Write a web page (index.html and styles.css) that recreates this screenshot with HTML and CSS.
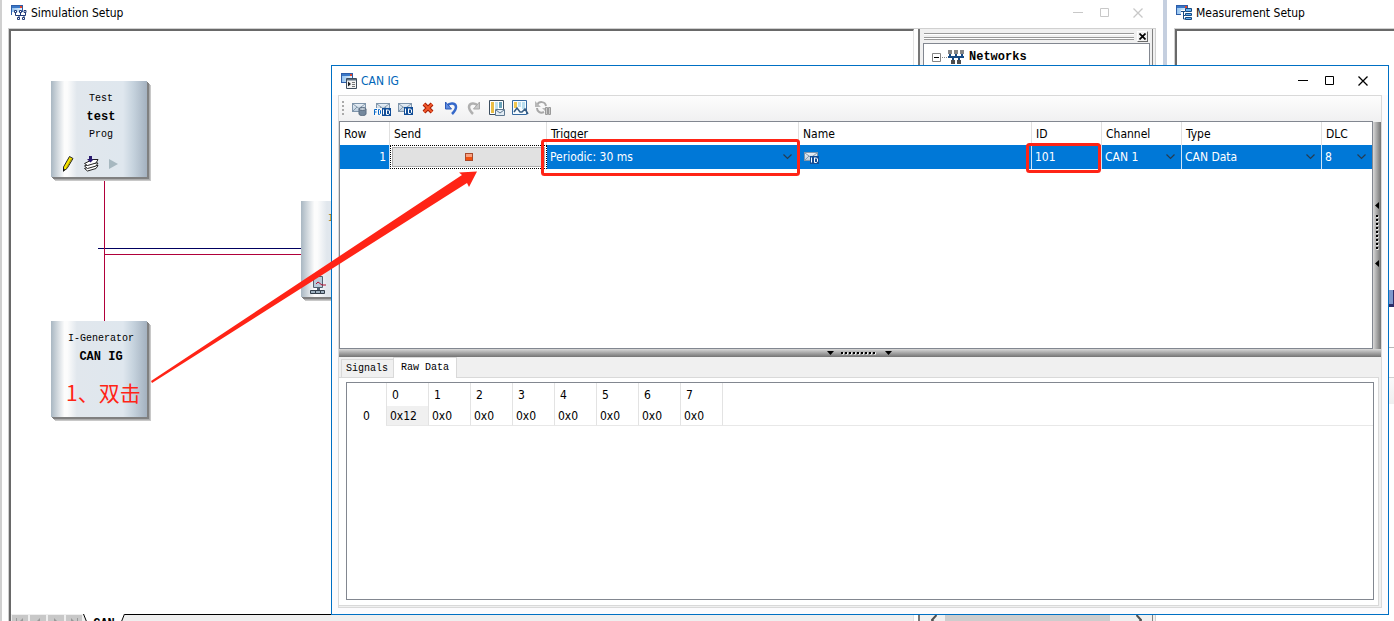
FILE: index.html
```html
<!DOCTYPE html>
<html lang="en">
<head>
<meta charset="utf-8">
<title>CAN IG</title>
<link rel="stylesheet" href="styles.css">
</head>
<body>
<svg class="defs" aria-hidden="true">
  <defs>
    <linearGradient id="win" x1="0" x2="1"><stop offset="0" stop-color="#8fc0ee"/><stop offset="1" stop-color="#e8f4ff"/></linearGradient>
    <linearGradient id="mail" x1="0" y1="0" x2="0" y2="1"><stop offset="0" stop-color="#eaf1f8"/><stop offset="1" stop-color="#b9cbdc"/></linearGradient>
    <symbol id="app-window" viewBox="0 0 16 16">
      <rect x=".5" y=".5" width="11" height="9" fill="url(#win)" stroke="#2d5da8"/>
      <path d="M1 1h10v2H1z" fill="#3a78c8"/><path d="M9 1h2v2H9z" fill="#e0452c"/>
    </symbol>
    <symbol id="chevron" viewBox="0 0 9 6"><path d="m.5.5 4 4 4-4" fill="none" stroke="#263c50" stroke-width="1.200"/></symbol>
    <symbol id="envelope" viewBox="0 0 16 16">
      <rect x="1.500" y="3.500" width="13" height="8" fill="url(#mail)" stroke="#7f95ab"/>
      <path d="m2 4 6 4.500L14 4M2 11l4-4M14 11l-4-4" fill="none" stroke="#8599ab"/>
    </symbol>
    <symbol id="id-badge" viewBox="0 0 9 8">
      <path d="M0 0h9v8H0z" fill="#124e98"/>
      <path d="M1.500 1.500v5M4 2h2.500l1 1v2.500l-1 1H4.500V2" fill="none" stroke="#fff"/>
    </symbol>
    <symbol id="minimize" viewBox="0 0 10 10"><path d="M0 4.500h10" stroke="currentColor"/></symbol>
    <symbol id="maximize" viewBox="0 0 10 10"><path d="M.5.5h8v8h-8z" fill="none" stroke="currentColor"/></symbol>
    <symbol id="close" viewBox="0 0 10 10"><path d="m.5.5 9 9m0-9-9 9" stroke="currentColor" stroke-width="1.300"/></symbol>
  </defs>
</svg>

<main class="desktop">
  <section class="window simulation">
    <header class="titlebar">
      <svg class="icon" viewBox="0 0 16 16"><use href="#app-window"/><path d="M1 7h15v9H6V10H1z" fill="#fff"/><path d="M4.500 7v3.500h10V7M8 10.500V13M13 10.500V13M9.500 7v3" fill="none" stroke="#1f3a78"/><g fill="#fff" stroke="#1f3a78"><path d="M3.500 5.500h2v2h-2zM8.500 5.500h2v2h-2zM13 5.500h2v2h-2zM6.500 12.500h2v2h-2zM11.500 12.500h2v2h-2z"/></g></svg>
      <h1>Simulation Setup</h1>
      <div class="controls muted">
        <button type="button" aria-label="Minimize"><svg><use href="#minimize"/></svg></button>
        <button type="button" aria-label="Maximize"><svg><use href="#maximize"/></svg></button>
        <button type="button" aria-label="Close"><svg><use href="#close"/></svg></button>
      </div>
    </header>
    <div class="frame">
      <div class="workspace">
        <div class="canvas">
          <svg class="wires" aria-hidden="true">
            <path d="M87 217h204v1H87z" fill="#000060"/>
            <path d="M93 149h1v141h-1z" fill="#b0003a"/>
            <path d="M93 223h198v1H93z" fill="#b0003a"/>
          </svg>
          <article class="node node-test">
            <p>Test</p><p class="strong">test</p><p>Prog</p>
            <div class="node-tools">
              <svg viewBox="0 0 12 16"><path d="M7.500.5 11 2.500 5 12.500l-3.500 2.500v-4z" fill="#f6e400" stroke="#222"/><path d="M9.500 3 4.500 12" stroke="#a89400"/><path d="m1 12 2 1.500L1 16z" fill="#111"/></svg>
              <svg viewBox="0 0 15 16"><g fill="#fff" stroke="#222"><path d="m.5 12.500 8-3h5.500l-2 3-8.500 2.500z"/><path d="m.5 10 8-3h5.500l-2 3-8.500 2.500z"/><path d="m.5 7.500 8-4h5.500l-2 3.500-8.500 2.500z"/></g><path d="M5 0h3v3h2L6.500 6.500 3 3h2z" fill="#2a1a70"/></svg>
              <svg viewBox="0 0 9 10"><path d="m0 0 9 5-9 5z" fill="#a7b8c0"/></svg>
            </div>
          </article>
          <article class="node node-ig"><p>I-Generator</p><p class="strong">CAN IG</p></article>
          <article class="node node-interactive"><p>I</p>
            <svg class="device" viewBox="0 0 18 18"><path d="M4.500.5h9v11h-9z" fill="#b9cbd9" stroke="#4f6070"/><path d="M8 12h3v3H8z" fill="#4f6070"/><path d="M1.500 14.500h5v3h-5zM6.500 14.500h5v3h-5zM11.500 14.500h4v3h-4z" fill="#9fb1c0" stroke="#333f4c"/><path d="m7 8 2-2 4 3h4" fill="none" stroke="#b01030"/></svg>
          </article>
        </div>
        <nav class="sheets">
          <button type="button" aria-label="First"><svg viewBox="0 0 8 10"><path d="M0 0h1v10H0zM7 0v10L2 5z"/></svg></button>
          <button type="button" aria-label="Previous"><svg viewBox="0 0 8 10"><path d="M6 0v10L1 5z"/></svg></button>
          <button type="button" aria-label="Next"><svg viewBox="0 0 8 10"><path d="M2 0v10l5-5z"/></svg></button>
          <button type="button" aria-label="Last"><svg viewBox="0 0 8 10"><path d="M7 0h1v10H7zM1 0v10l5-5z"/></svg></button>
          <button type="button" class="sheet"><svg viewBox="0 0 42 20"><path d="M0 0h42L33 20H9z" fill="#fff"/><path d="m.5 0 8 20M41.500 0l-8 20" stroke="#000"/></svg><span>CAN</span></button>
          <span class="sheet-line"></span>
        </nav>
      </div>
      <aside class="networks">
        <div class="grip"><i></i><button type="button" aria-label="Close panel"><svg viewBox="0 0 7 7"><path d="m.5.5 6 6m0-6-6 6" stroke="#000" stroke-width="1.700"/></svg></button></div>
        <div class="tree">
          <svg class="expander" viewBox="0 0 16 9"><path d="M.5.5h8v8h-8z" fill="#fff" stroke="#848484"/><path d="M2 4.500h5" stroke="#000"/><path d="M10 4.500h6" stroke="#888" stroke-dasharray="1 1"/></svg>
          <svg class="icon" viewBox="0 0 16 14"><path d="M0 0h4v4H0zM6 0h4v4H6zM12 0h4v4h-4z" fill="#858585"/><path d="M2 4v3M8 4v3M14 4v3M5 7v3M11 7v3M0 7h16" stroke="#174a83" stroke-width="2"/><path d="M3 10h4v4H3zM9 10h4v4H9z" fill="#4d4d4d"/></svg>
          <span>Networks</span>
        </div>
        <div class="scroll">
          <svg viewBox="0 0 6 10"><path d="M5.500 0 1 5l4.500 5"/></svg><i></i><svg viewBox="0 0 6 10"><path d="M.5 0 5 5 .5 10"/></svg>
        </div>
      </aside>
    </div>
  </section>

  <section class="window measurement">
    <header class="titlebar">
      <svg class="icon" viewBox="0 0 16 16"><use href="#app-window"/><path d="M5 5h11v11H8v-5H5z" fill="#fff"/><path d="M5 6.500h4M7.500 6v8M7.500 10.500h2M7.500 14h2" fill="none" stroke="#174a83"/><path d="M9.500 3.500h6v3h-6zM9.500 8.500h6v2h-6zM9.500 12.500h6v2h-6z" fill="#63b0ee" stroke="#174a83"/></svg>
      <h2>Measurement Setup</h2>
    </header>
    <div class="frame measure-frame"><i class="block"></i><i class="strip"></i></div>
  </section>

  <section class="dialog">
    <header class="titlebar">
      <svg class="icon" viewBox="0 0 16 16"><use href="#app-window"/><path d="M5.500 5.500h10v10h-10z" fill="#f4f4f4" stroke="#3e4c5c"/><path d="M6 6h9v1.500H6z" fill="#5b6c7e"/><path d="m7 8.500 3 2.500-3 2.500z" fill="#222"/><path d="M11 9.500h3M11 11.500h3M11 13.500h3" stroke="#777"/></svg>
      <h2>CAN IG</h2>
      <div class="controls">
        <button type="button" aria-label="Minimize"><svg><use href="#minimize"/></svg></button>
        <button type="button" aria-label="Maximize"><svg><use href="#maximize"/></svg></button>
        <button type="button" aria-label="Close"><svg><use href="#close"/></svg></button>
      </div>
    </header>
    <div class="panel">
      <div class="toolbar" role="toolbar" aria-label="Frames">
        <i class="handle"></i>
        <button type="button" aria-label="New frame from database"><svg viewBox="0 0 16 16"><use href="#envelope" width="16" height="16"/><path d="M8 9v5c0 2 7 2 7 0V9z" fill="#74889d" stroke="#596b80"/><ellipse cx="11.500" cy="9" rx="3.500" ry="1.500" fill="#c3ced9" stroke="#596b80"/></svg></button>
        <button type="button" aria-label="New CAN FD frame"><svg viewBox="0 0 16 16"><use href="#envelope" x="1" width="16" height="16"/><path d="M0 8h8v8H0z" fill="#f8f8f8"/><path d="M.5 15V9.500H3M.5 12h2M4.500 9.500v5h1l1-1v-3l-1-1z" fill="none" stroke="#0868c8"/><use href="#id-badge" x="8" y="8" width="9" height="8"/></svg></button>
        <button type="button" aria-label="New CAN frame"><svg viewBox="0 0 16 16"><use href="#envelope" width="16" height="16"/><use href="#id-badge" x="7" y="7" width="9" height="8"/></svg></button>
        <button type="button" aria-label="Delete"><svg viewBox="0 0 16 16"><path d="m4 4 8 8m0-8-8 8" stroke="#a51c04" stroke-width="4"/><path d="m4 4 8 8m0-8-8 8" stroke="#f2592c" stroke-width="2"/></svg></button>
        <button type="button" aria-label="Undo"><svg viewBox="0 0 16 16"><path d="M4 6c3-4 9-3 9 1 0 3-2 5-4 7" fill="none" stroke="#3669ca" stroke-width="2.500"/><path d="M2.500 2v7h6z" fill="#5f8ce0" stroke="#2d5ab8"/></svg></button>
        <button type="button" aria-label="Redo" disabled><svg viewBox="0 0 16 16"><path d="M12 6C9 2 3 3 3 7c0 3 2 5 4 7" fill="none" stroke="#b0b0b0" stroke-width="2.500"/><path d="M13.500 2v7h-6z" fill="#c8c8c8" stroke="#a8a8a8"/></svg></button>
        <button type="button" aria-label="Show columns"><svg viewBox="0 0 16 16"><path d="M.5.5h14v14H.5z" fill="#fff" stroke="#3c4e60"/><path d="M2 2h3v11H2z" fill="#e8bd45"/><path d="M6 2h3v7H6z" fill="#bfe0ee"/><path d="M10 2h3v6h-3z" fill="#6aa4bb"/><path d="M6.500 9.500h9v6h-9z" fill="#e3ecf4" stroke="#5e7890"/><path d="m7 10 4 3 4-3" fill="none" stroke="#5e7890"/></svg></button>
        <button type="button" aria-label="Show signals"><svg viewBox="0 0 16 16"><path d="M.5.5h14v14H.5z" fill="#f7fcff" stroke="#3569a0"/><path d="M2 2h3v6H2z" fill="#f1c64d"/><path d="M6 2h3v5H6zM10 2h3v7h-3z" fill="#b9deee"/><path d="m2 12 3-4 3 4h2l3-3 3 5" fill="none" stroke="#385d83" stroke-width="1.500"/></svg></button>
        <button type="button" aria-label="Synchronize" disabled><svg viewBox="0 0 16 16"><path d="M2 5c2-4 8-4 9 1M9 12c-4 2-7-1-7-4" fill="none" stroke="#a8a8a8" stroke-width="2"/><path d="M0 1v6h6zM12 8H7l4 4" fill="#b8b8b8"/><path d="M10.500 7.500h2v7h-2zM13.500 7.500h2v7h-2z" fill="#cacaca" stroke="#9a9a9a"/></svg></button>
      </div>
      <div class="upper">
        <div class="frames">
          <table class="frame-table">
            <colgroup><col class="w-row"><col class="w-send"><col class="w-trigger"><col><col class="w-id"><col class="w-channel"><col class="w-type"><col class="w-dlc"></colgroup>
            <thead><tr><th>Row</th><th>Send</th><th>Trigger</th><th>Name</th><th>ID</th><th>Channel</th><th>Type</th><th>DLC</th></tr></thead>
            <tbody><tr>
              <td class="number">1</td>
              <td class="send-cell"><button type="button" aria-label="Send"><i></i></button></td>
              <td><div class="pick"><select aria-label="Trigger"><option>Periodic: 30 ms</option></select><svg><use href="#chevron"/></svg></div></td>
              <td class="name-cell"><svg class="icon" viewBox="0 0 16 16"><use href="#envelope" width="16" height="16"/><use href="#id-badge" x="7" y="7" width="9" height="8"/></svg></td>
              <td><input class="id-input" aria-label="ID" value="101"></td>
              <td><div class="pick"><select aria-label="Channel"><option>CAN 1</option></select><svg><use href="#chevron"/></svg></div></td>
              <td><div class="pick"><select aria-label="Type"><option>CAN Data</option></select><svg><use href="#chevron"/></svg></div></td>
              <td><div class="pick"><select aria-label="DLC"><option>8</option></select><svg><use href="#chevron"/></svg></div></td>
            </tr></tbody>
          </table>
        </div>
        <div class="splitter vertical"><svg viewBox="0 0 8 68"><path d="M6 0v7L2 3.500zM6 58v7L2 61.500z"/><path d="M4.500 14v34" stroke="#fff" stroke-width="2" stroke-dasharray="2 2"/><path d="M4 13v34" stroke="#000" stroke-width="2" stroke-dasharray="2 2"/></svg></div>
      </div>
      <div class="splitter horizontal"><svg viewBox="0 0 66 8"><path d="M0 2h7L3.500 6zM58 2h7l-3.500 4z"/><path d="M15 4.500h34" stroke="#fff" stroke-width="2" stroke-dasharray="2 2"/><path d="M14 4h35" stroke="#000" stroke-width="2" stroke-dasharray="2 2"/></svg></div>
      <div class="lower">
        <div class="tabs" role="tablist"><button type="button" role="tab">Signals</button><button type="button" role="tab" aria-selected="true" class="active">Raw Data</button></div>
        <div class="tab-page"><div class="raw">
          <table class="raw-table">
            <colgroup><col class="w-head"><col span="8" class="w-byte"><col></colgroup>
            <thead><tr><th></th><th>0</th><th>1</th><th>2</th><th>3</th><th>4</th><th>5</th><th>6</th><th>7</th><th></th></tr></thead>
            <tbody><tr><th>0</th><td class="selected">0x12</td><td>0x0</td><td>0x0</td><td>0x0</td><td>0x0</td><td>0x0</td><td>0x0</td><td>0x0</td><td></td></tr></tbody>
          </table>
        </div></div>
      </div>
    </div>
  </section>

  <svg class="marks" aria-hidden="true">
    <path d="M151 381 462 175l-3-2.500 18-1-8 15.500-2-4L152 383z" fill="#ff2416"/>
    <g fill="none" stroke="#ff2416" stroke-width="3"><rect x="542.500" y="140.500" width="256" height="34" rx="2"/><rect x="1027.500" y="144.500" width="72" height="27" rx="2"/></g>
  </svg>
  <p class="note" lang="zh">1、双击</p>
</main>
</body>
</html>
```
FILE: styles.css
```css
* { box-sizing: border-box; }
body { margin: 0; background: #fff; color: #000; font: 12px/16px "DejaVu Sans Condensed", "Noto Sans", sans-serif; }
h1, h2, p { margin: 0; font: inherit; }
button, input, select { margin: 0; padding: 0; border: 0; border-radius: 0; background: none; color: inherit; font: inherit; }
svg { display: block; flex: none; }
.defs { position: absolute; width: 0; height: 0; }
.icon { width: 16px; height: 16px; }

.desktop { position: relative; display: grid; grid-template-columns: minmax(0, 1fr) 231px; height: 100vh; overflow: hidden; }
.window { display: flex; flex-direction: column; min-width: 0; }
.titlebar { display: flex; align-items: center; gap: 4px; flex: none; height: 28px; }
.controls { display: flex; gap: 17px; margin-left: auto; }
.controls svg { width: 10px; height: 10px; }
.controls button:last-child { margin-left: 6px; }
.controls.muted { color: #c8c8c8; }

.simulation { height: calc(100vh + 16px); padding: 0 7px 0 6px; border-left: 2px solid #d0d0d0; }
.simulation .titlebar { padding: 0 13px 2px 3px; }
.frame { display: flex; flex: 1; min-height: 0; border: 1px solid #d0d0d0; }
.workspace { display: flex; flex-direction: column; flex: 1; min-width: 0; border: 2px solid #696969; border-right: 1px solid #e3e3e3; }
.canvas { position: relative; flex: 1; overflow: hidden; }
.wires { width: 100%; height: 100%; }

.node { position: absolute; width: 96px; height: 96px; padding-top: 9px; text-align: center; font: 10px/18px "Liberation Mono", monospace; background: linear-gradient(90deg, #a9b7c2, #fcfcfc 14%, #fcfcfc 17%, #e1e7ed 27%, #dfe7ee 75%, #c5d2dd 86%, #a4b1bf); box-shadow: 1px 1px #808080, 2px 2px #808080, 3px 3px #acacac, 4px 4px #c8c8c8; }
.node p { padding-left: 4px; }
.node .strong { font-size: 12px; font-weight: bold; }
.node-test { left: 40px; top: 50px; }
.node-ig { left: 40px; top: 290px; }
.node-interactive { left: 290px; top: 170px; }
.node-interactive p { padding-left: 0; margin-left: -36px; color: #a07820; }
.node-tools { display: flex; align-items: center; gap: 10px; padding: 12px 0 0 11px; }
.node-tools svg:nth-child(1) { width: 12px; height: 16px; }
.node-tools svg:nth-child(2) { width: 15px; height: 16px; }
.node-tools svg:nth-child(3) { width: 9px; height: 10px; }
.device { position: absolute; left: 8px; top: 75px; width: 18px; height: 18px; }

.sheets { display: flex; flex: none; gap: 2px; height: 20px; padding-left: 1px; background: #efefef; }
.sheets button { display: flex; align-items: center; justify-content: center; width: 16px; height: 16px; margin-top: 1px; background: #c8c8c8; fill: #999; }
.sheets button svg { width: 8px; height: 10px; }
.sheets .sheet { position: relative; width: 42px; height: 20px; margin: 0 0 0 -1px; background: none; font: bold 12px/16px "Liberation Mono", monospace; }
.sheets .sheet svg { position: absolute; inset: 0; width: 42px; height: 20px; }
.sheet span { position: relative; }
.sheet-line { flex: 1; margin-left: -3px; border-top: 1px solid #000; }

.networks { display: flex; flex-direction: column; width: 237px; padding: 0 5px 8px 3px; background: linear-gradient(#808080, #808080) right 2px top / 1px 100% no-repeat #f0f0f0; border-left: 2px solid #777; margin-left: 4px; }
.grip { display: flex; align-items: center; gap: 3px; height: 14px; padding: 0 2px 0 1px; flex: none; }
.grip i { flex: 1; height: 7px; border: solid #999; border-width: 1px 0; background: linear-gradient(#fff 1px, #f0f0f0 1px 3px, #999 3px 4px, #fff 4px); }
.grip button { display: grid; place-items: center; width: 11px; height: 11px; border: 1px solid #fff; border-color: #fff #696969 #696969 #fff; }
.grip svg { width: 7px; height: 7px; }
.tree { flex: 1; display: flex; align-items: flex-start; padding: 5px 8px; border: 1px solid #828790; background: #fff; font: bold 12px/16px "Liberation Mono", monospace; }
.expander { width: 16px; height: 9px; margin-top: 4px; }
.tree .icon { height: 14px; margin-top: 1px; }
.tree span { margin-left: 5px; }
.scroll { display: flex; align-items: center; gap: 8px; height: 17px; padding: 0 8px; background: #f0f0f0; }
.scroll svg { width: 6px; height: 10px; fill: none; stroke: #505050; stroke-width: 2; }
.scroll i { flex: 1; height: 17px; margin-right: 18px; background: #cdcdcd; }

.measurement { height: 404px; padding-left: 7px; border-left: 4px solid #c5cfdf; }
.measurement .titlebar { padding: 0 0 2px 2px; }
.measurement .frame { position: relative; border-width: 1px 0 0 1px; box-shadow: inset 2px 2px #696969; }
.block { position: absolute; right: 0; top: 261px; width: 5px; height: 17px; background: #8099cc; border: solid #2d2d68; border-width: 0 1px 3px 0; }
.strip { position: absolute; right: 0; bottom: 0; width: 12px; height: 57px; border-top: 1px solid #b8b8b8; background: linear-gradient(#fff 29px, #d0d0d0 29px 30px, #fafafa 30px, #efefef); }

.dialog { position: absolute; inset: 65px 5px 6px 331px; display: flex; flex-direction: column; padding: 0 6px 6px; border: 1px solid #0070c4; background: #fcfbfd; }
.dialog .titlebar { height: 29px; margin: 0 -6px; padding: 0 20px 0 9px; color: #0066b8; background: #fff; }
.dialog .controls { color: #000; }
.panel { display: flex; flex: 1; flex-direction: column; min-height: 0; border: 1px solid #d9d9d9; background: #f0f0f0; }
.toolbar { display: flex; flex: none; align-items: center; gap: 7px; height: 25px; padding: 0 0 2px 3px; background: linear-gradient(#fdfdfd, #f0f0f1); }
.toolbar svg { width: 16px; height: 16px; overflow: visible; }
.handle { width: 2px; height: 14px; background: repeating-linear-gradient(#aaa 0 2px, transparent 2px 4px); }
.upper { display: flex; flex: none; height: 228px; }
.frames { flex: 1; min-width: 0; border: 1px solid #828790; background: #fff; }
table { border-collapse: separate; border-spacing: 0; table-layout: fixed; width: 100%; }
th, td { padding: 0; text-align: left; font-weight: normal; }
.w-row { width: 50px; } .w-send { width: 157px; } .w-trigger { width: 252px; } .w-id { width: 70px; }
.w-channel { width: 80px; } .w-type { width: 140px; } .w-dlc { width: 50px; }
.frame-table th { height: 23px; padding-left: 4px; border-right: 1px solid #e0e0e0; }
.frame-table td { height: 24px; border-right: 1px solid #cfe3f5; background: #0078d7; color: #fff; }
.frame-table th:last-child, .frame-table td:last-child { border-right: 0; }
.frame-table td.number { padding-right: 3px; text-align: right; }
.frame-table td.send-cell { padding: 1px; border: 1px dotted #000; background: #fff; }
.send-cell button { display: grid; place-items: center; width: 100%; height: 20px; border: 1px solid #adadad; background: #e1e1e1; }
.send-cell i { width: 8px; height: 8px; border: 1px solid #a84a2c; background: linear-gradient(#f8a080 50%, #f05010 50%); }
.pick { display: flex; align-items: center; padding: 0 6px 0 3px; }
.pick select { flex: 1; min-width: 0; appearance: none; }
.pick svg { width: 9px; height: 6px; }
.name-cell { padding-left: 4px !important; }
.id-input { width: 100%; padding-left: 3px; }

.splitter { display: flex; flex: none; align-items: center; justify-content: center; }
.vertical { width: 8px; margin-top: 1px; background: linear-gradient(90deg, #d8d8d8, #737373); }
.vertical svg { width: 8px; height: 68px; }
.horizontal { height: 8px; background: linear-gradient(#d8d8d8, #737373); }
.horizontal svg { width: 66px; height: 8px; }

.lower { display: flex; flex: 1; flex-direction: column; min-height: 0; padding: 0 2px 1px 0; }
.tabs { display: flex; flex: none; align-items: flex-end; height: 20px; padding-left: 2px; font: 10px/16px "Liberation Mono", monospace; }
.tabs button { height: 18px; padding: 1px 5px 0 4px; border: 1px solid #d9d9d9; border-bottom: 0; }
.tabs .active { height: 21px; margin: 0 0 -1px -1px; padding: 0 7px; background: #fff; z-index: 1; }
.tab-page { display: flex; flex: 1; padding: 4px 4px 5px 7px; border: 1px solid #d9d9d9; border-left: 0; background: #fff; }
.raw { flex: 1; border: 1px solid #828790; }
.w-head { width: 39px; } .w-byte { width: 42px; }
.raw-table th { height: 23px; padding-left: 5px; border-left: 1px solid #e3e3e3; }
.raw-table td { height: 20px; padding-left: 3px; border-left: 1px solid #e3e3e3; border-bottom: 1px solid #e8e8e8; }
.raw-table tbody th { height: 20px; padding-left: 16px; }
.raw-table tr > :first-child { border-left: 0; }
.raw-table .selected { background: #f0f0f0; }

.marks { position: absolute; inset: 0; width: 100%; height: 100%; pointer-events: none; }
.note { position: absolute; left: 66px; top: 378px; color: #ff2416; font: 21px/28px "Noto Sans CJK SC", sans-serif; }
```
